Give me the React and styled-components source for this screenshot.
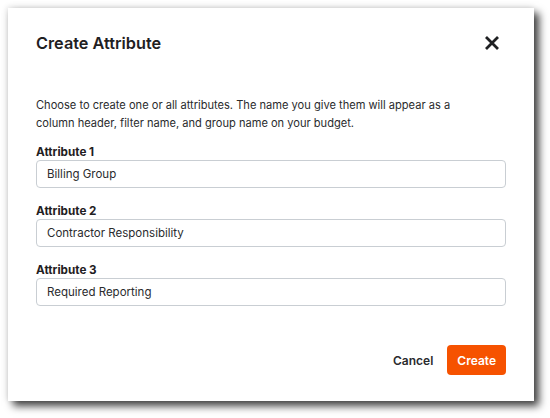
import React from 'react';
import styled, { createGlobalStyle } from 'styled-components';

const GlobalStyle = createGlobalStyle`
  html, body {
    margin: 0;
    padding: 0;
    background: #ffffff;
    font-family: Inter, "Liberation Sans", sans-serif;
  }
`;

const Page = styled.div`
  width: 550px;
  height: 418px;
  padding: 8px 0 0 8px;
  box-sizing: border-box;
`;

const Modal = styled.div`
  width: 526px;
  height: 393px;
  background: #fff;
  box-shadow: 5px 5px 8px rgba(0, 0, 0, 0.75), -1px -1px 6px rgba(0, 0, 0, 0.12);
  padding: 24px 28px 26px 28px;
  box-sizing: border-box;
  display: flex;
  flex-direction: column;
`;

const Header = styled.div`
  display: flex;
  align-items: center;
  justify-content: space-between;
  height: 22px;
`;

const Title = styled.h2`
  margin: 0;
  font-size: 16.3px;
  font-weight: 600;
  color: #1f2022;
`;

const CloseButton = styled.button`
  border: none;
  background: none;
  padding: 0;
  margin-right: 6px;
  width: 16px;
  height: 16px;
  display: flex;
  cursor: pointer;
`;

const Description = styled.p`
  margin: 42px 0 0 0;
  max-width: 425px;
  font-size: 11.1px;
  line-height: 18px;
  color: #2a2b2d;
`;

const Fields = styled.div`
  display: flex;
  flex-direction: column;
  gap: 16px;
  margin-top: 13px;
`;

const Field = styled.label`
  display: flex;
  flex-direction: column;
  gap: 1px;
`;

const Label = styled.span`
  font-size: 11.7px;
  font-weight: 700;
  line-height: 14px;
  color: #1f2022;
`;

const Input = styled.input`
  height: 28px;
  box-sizing: border-box;
  border: 1px solid #c9ced3;
  border-radius: 4px;
  padding: 0 10px;
  font-family: inherit;
  font-size: 11.5px;
  color: #2a2b2d;
  outline: none;
`;

const Footer = styled.div`
  margin-top: auto;
  display: flex;
  justify-content: flex-end;
  align-items: center;
  gap: 4px;
`;

const Button = styled.button`
  height: 30px;
  border: none;
  border-radius: 4px;
  padding: 0 10px;
  font-family: inherit;
  font-size: 12px;
  font-weight: 600;
  cursor: pointer;
  background: ${(p) => (p.$primary ? '#f65200' : 'transparent')};
  color: ${(p) => (p.$primary ? '#fff' : '#2a2b2d')};
`;

const attributes = [
  { label: 'Attribute 1', value: 'Billing Group' },
  { label: 'Attribute 2', value: 'Contractor Responsibility' },
  { label: 'Attribute 3', value: 'Required Reporting' },
];

const App = () => (
  <>
    <GlobalStyle />
    <Page>
      <Modal>
        <Header>
          <Title>Create Attribute</Title>
          <CloseButton aria-label="Close">
            <svg width="16" height="16" viewBox="0 0 16 16">
              <path d="M2 2 L14 14 M14 2 L2 14" stroke="#1f2022" strokeWidth="2.8" strokeLinecap="butt" />
            </svg>
          </CloseButton>
        </Header>
        <Description>
          Choose to create one or all attributes. The name you give them will appear as a
          column header, filter name, and group name on your budget.
        </Description>
        <Fields>
          {attributes.map((a) => (
            <Field key={a.label}>
              <Label>{a.label}</Label>
              <Input defaultValue={a.value} />
            </Field>
          ))}
        </Fields>
        <Footer>
          <Button>Cancel</Button>
          <Button $primary>Create</Button>
        </Footer>
      </Modal>
    </Page>
  </>
);

export default App;
